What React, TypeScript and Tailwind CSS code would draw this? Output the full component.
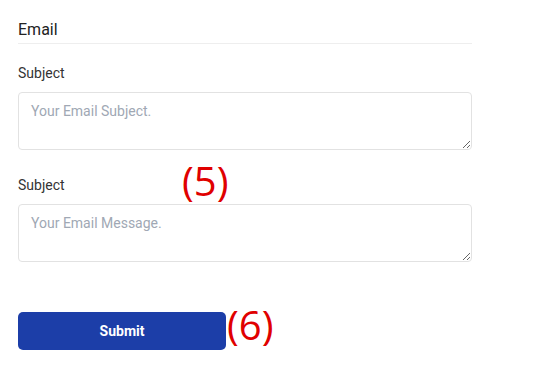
import React from "react";

export default function App() {
  return (
    <div className="relative w-[548px] h-[370px] bg-white" style={{ fontFamily: "Roboto, 'Liberation Sans', sans-serif" }}>
      <div className="pl-[18px] pt-[19px] w-[472px]">
        <h2 className="text-[16px] font-normal leading-[22px] pb-[2px] text-[#222] border-b border-[#eeeeee]">Email</h2>
        <label className="block mt-[19px] text-[14px] leading-[20px] text-[#333]">Subject</label>
        <textarea
          className="block mt-[9px] w-full h-[58px] rounded-[4px] border border-[#e2e2e2] px-[12px] py-[8px] text-[14px] leading-[20px] text-[#333] placeholder:text-[#a0a8b4] outline-none"
          placeholder="Your Email Subject."
        />
        <label className="block mt-[25px] text-[14px] leading-[20px] text-[#333]">Subject</label>
        <textarea
          className="block mt-[9px] w-full h-[58px] rounded-[4px] border border-[#e2e2e2] px-[12px] py-[8px] text-[14px] leading-[20px] text-[#333] placeholder:text-[#a0a8b4] outline-none"
          placeholder="Your Email Message."
        />
        <button className="mt-[50px] w-[208px] h-[38px] rounded-[5px] bg-[#1c3ea8] text-white text-[14px] font-bold">Submit</button>
      </div>
      <span className="absolute left-[182px] top-[155px] text-[40px] leading-[52px] text-[#e00000]" style={{ fontFamily: "'Open Sans', sans-serif" }}>(5)</span>
      <span className="absolute left-[227px] top-[299px] text-[40px] leading-[52px] text-[#e00000]" style={{ fontFamily: "'Open Sans', sans-serif" }}>(6)</span>
    </div>
  );
}
